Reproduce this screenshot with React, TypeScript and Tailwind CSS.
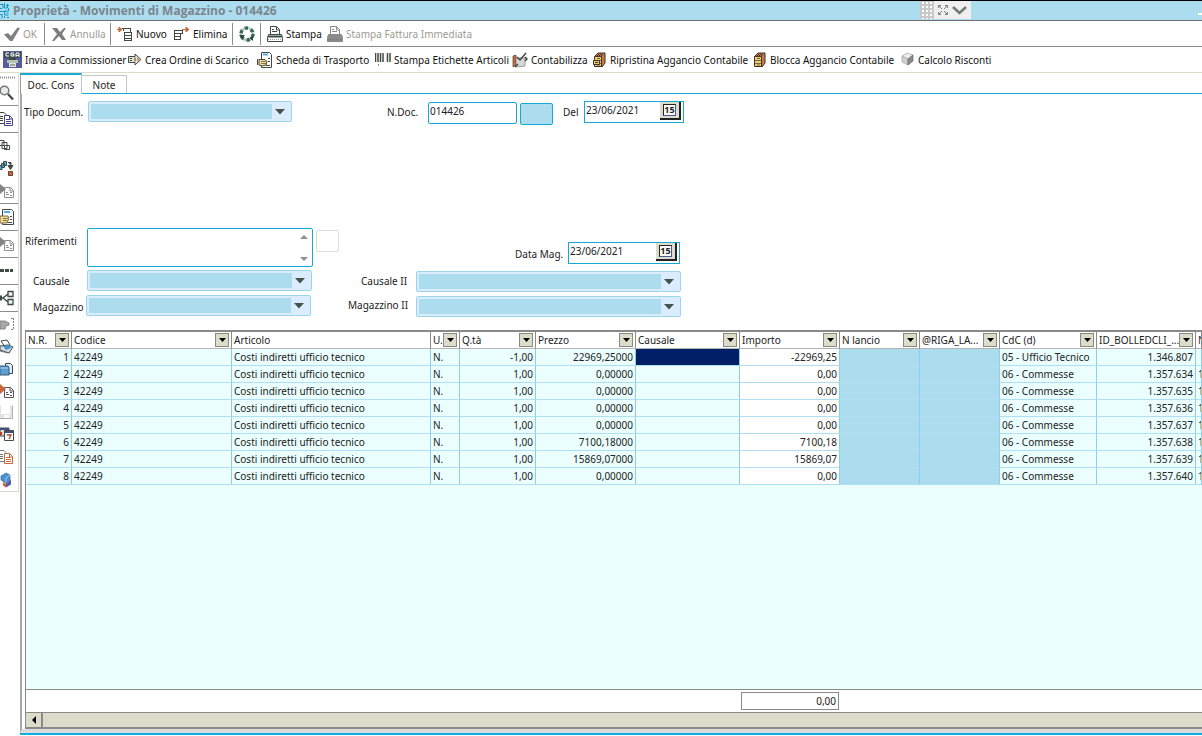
import React from "react";

type IconProps = { children: React.ReactNode; w?: number; h?: number };

function Svg({ children, w = 16, h = 16 }: IconProps) {
  return (
    <svg width={w} height={h} viewBox={`0 0 ${w} ${h}`} className="shrink-0" fill="none" aria-hidden="true">
      {children}
    </svg>
  );
}

const ink = "#3f4a44";

const CheckIcon = () => (
  <Svg>
    <path d="M0 8.500 4 7l3 3L13.500 1.500 16 2 8.500 15H6z" fill="#808080" />
  </Svg>
);
const CrossIcon = () => (
  <Svg>
    <path d="M1 2h5l3 4 4-4h2l-4 6 4 6h-4l-3-4-5 5H1l5-7z" fill="#7c7c7c" />
  </Svg>
);
const NewIcon = () => (
  <Svg>
    <path d="M0 3.500h4M2 1l3 2.500L2 6z" stroke="#c8683a" fill="#c8683a" />
    <path d="M5 2.500h9M6.500 2v3M13.500 2v5" stroke={ink} />
    <path d="M7 6.500h8M7 9.500h8M7 12.500h8M7 14.500h8M7.500 6v9M14.500 6v9" stroke={ink} />
  </Svg>
);
const RemoveIcon = () => (
  <Svg>
    <path d="M0 4.500h9M0 7.500h9M0 10.500h7M0 13.500h7M.5 4v10M6.500 8v6M8.500 4v4" stroke={ink} />
    <path d="M8 3.500h5M12 1l3 2.500L12 6z" stroke="#c8683a" fill="#c8683a" />
  </Svg>
);
const RecycleIcon = () => (
  <Svg>
    <circle cx="8" cy="8" r="6" stroke="#3f6a52" strokeWidth="3.500" strokeDasharray="3.500 2.800" />
    <circle cx="8" cy="8" r="6" stroke="#8fb7cf" strokeWidth="2" strokeDasharray="1.800 4.500" strokeDashoffset="-4" />
    <path d="M0 9h6l-3 4zM10 12l4 3v-5z" fill="#2f4a3c" />
  </Svg>
);
const PrinterIcon = ({ dim = false }: { dim?: boolean }) => {
  const c = dim ? "#8a8a8a" : ink;
  return (
    <Svg>
      <path d="M3.500 8V.5h6l3 3V8" stroke={c} fill="#fff" />
      <path d="M5 3.500h2M5 5.500h5M9.500 1v3h3" stroke={c} />
      <path d="M1.500 8.500h13l1 3v4H.5v-4z" fill={dim ? "#8a8a8a" : "#fff"} stroke={c} />
      <path d="M1 10.500h14" stroke={c} strokeWidth={dim ? 1 : 2} />
      <path d="M1 13.500h14" stroke={dim ? "#777" : "#9a9a9a"} strokeDasharray="1 1" />
    </Svg>
  );
};
const CgaIcon = () => (
  <Svg w={19} h={17}>
    <path d="M0 0h19v17H0z" fill="#5a5a9e" />
    <path d="M1 1h17v6H1z" fill="#3d4a52" />
    <path d="M6 2H3v3h3M11 2H8v3h3V3.500H9.500M13 6V2h3v4M13 4.500h3" stroke="#fff" />
    <path d="M4 9h11v3H4z" fill="#b8c4b0" />
    <path d="M6 7h7v2H6z" fill="#3f4a44" />
    <path d="M6 12h7v4H6z" fill="#dfe5d8" />
    <path d="M7 14h5" stroke="#5c6b5c" />
  </Svg>
);
const OrderArrowIcon = () => (
  <Svg w={14} h={14}>
    <path d="M.5 3.500H7V1l6 5.500L7 12V9.500H.5z" fill="#e6e0d0" stroke={ink} />
    <path d="M2 5.500h2M2 7.500h2M7 4.500v4" stroke={ink} />
    <path d="M9 5h2v3H9z" fill="#e09050" />
  </Svg>
);
const HandDocIcon = () => (
  <Svg>
    <path d="M4.500 .5h8l2 2v13h-10z" fill="#fff" stroke={ink} />
    <path d="M6 2.500h5" stroke="#5aa8e0" strokeWidth="2" />
    <path d="M11 6.500h2M11 9.500h2M9 13.500h4" stroke={ink} />
    <path d="M.5 7v6M2 7.500h6l2 2-1 3.500-4 1-3-1z" fill="#f2dc9c" stroke="#4a4a40" />
    <path d="M4 9.500h5M4 11.500h5" stroke="#8a7440" />
  </Svg>
);
const BarcodeIcon = () => (
  <Svg>
    <path d="M.5 1v9M3 1v9M5.500 1v9M8 1v9" stroke={ink} strokeWidth="1.500" />
    <path d="M3.500 12v1.500" stroke="#777" />
    <path d="M12.500 1v9M15 1v9" stroke={ink} strokeWidth="1.500" />
  </Svg>
);
const LedgerIcon = () => (
  <Svg>
    <path d="M1 4l3-1v10l-3 2z" fill="#c8683a" stroke="#5a4032" strokeWidth=".7" />
    <path d="M4 6h9v8l-9 1z" fill="#d8d8d8" stroke="#777" strokeWidth=".7" />
    <path d="M5 5l3 3 6-7M3 15l3-3M13 5l2 2-2 2" stroke={ink} strokeWidth="1.500" />
  </Svg>
);
const CabinetIcon = ({ open = false }: { open?: boolean }) => (
  <Svg w={14} h={16}>
    <path d="M2 4l3-3h7v10l-3 4z" fill="#c8784c" stroke="#3f352c" />
    <path d="M5 2.500h6M4 3.500h6" stroke="#3f352c" strokeDasharray="1 1" />
    <path d="M1.500 4.500h7v10h-7z" fill="#f0cc6c" stroke="#3f352c" />
    <path d="M2 8.500h6M2 11.500h6M4 6.500h3M4 13h3" stroke="#5c4a30" strokeWidth=".8" />
    {open && <path d="M.5 8.500h6v4h-6z" fill="#f0cc6c" stroke="#3f352c" />}
    {open && <path d="M2 10.500h3" stroke="#3f352c" />}
  </Svg>
);
const CubeIcon = () => (
  <Svg w={14} h={15}>
    <path d="M1 4l5-3 6 2-5 4z" fill="#ececec" stroke="#a5a5a5" strokeWidth=".7" />
    <path d="M1 4l6 3v6l-6-3z" fill="#cfcfcf" stroke="#a5a5a5" strokeWidth=".7" />
    <path d="M7 7l5-4v6l-5 4z" fill="#8b8b8b" stroke="#666" strokeWidth=".7" />
  </Svg>
);

/* Rail icons */
const Lens = () => (
  <Svg w={14}>
    <circle cx="4.500" cy="5.500" r="4.300" fill="#e8eaf0" stroke="#777" strokeWidth="1.500" />
    <path d="M8 9l5 5.500" stroke="#444" strokeWidth="2.200" />
  </Svg>
);
const Pages = ({ a = "#444", b = "#46468c" }: { a?: string; b?: string }) => (
  <Svg w={14}>
    <path d="M-1 1.500h5l2 2v9h-7z" fill="#fff" stroke={a} />
    <path d="M0 5.500h3M0 7.500h3M0 9.500h3" stroke={a} />
    <path d="M4.500 4.500h5l3 3v7h-8z" fill="#fff" stroke={b} />
    <path d="M6 8.500h4M6 10.500h5M6 12.500h5M9.500 5v3h3" stroke={b} />
  </Svg>
);
const Windows3 = () => (
  <Svg w={14}>
    <path d="M-1 2.500h5v5h-5zM2 4.500h5v6H2zM4.500 7.500h5v4h-5z" fill="#fff" stroke={ink} />
  </Svg>
);
const StackArrow = () => (
  <Svg w={14}>
    <path d="M-1 4.500h3v4h-3zM1.500 2.500h3v4h-3zM3.500 .5h3v4h-3z" fill="#52b4d8" stroke={ink} />
    <path d="M8 1.500h3v3M8 4.500h5l-2.500 4z" stroke={ink} fill={ink} />
    <path d="M8.500 10.500h4v4h-4z" fill="#c8683a" stroke="#6a4030" />
  </Svg>
);
const ArrowDoc = ({ arrow = "#858585", line = "#8d8d8d" }: { arrow?: string; line?: string }) => (
  <Svg w={14}>
    <path d="M4.500 4.500h6l3 3v7h-9z" fill="#fff" stroke={line} />
    <path d="M6 9.500h2M10 9.500h2M6 11.500h3M10 12.500h2M10 5v3h3" stroke={line} />
    <path d="M0 3V1l6 5-6 5V8z" fill={arrow} />
  </Svg>
);
const HandPage = () => (
  <Svg w={14}>
    <path d="M2.500 .5h9l2 2v13h-11z" fill="#fff" stroke={ink} />
    <path d="M4 3h6" stroke="#5aa8e0" strokeWidth="2" />
    <path d="M10 7.500h2M10 10.500h2M7 13.500h5" stroke={ink} />
    <path d="M0 7h8l1 2-2 5H0z" fill="#f2d894" stroke="#5a5038" strokeWidth=".8" />
    <path d="M3 9.500h5M3 11.500h4" stroke="#8a7440" />
  </Svg>
);
const Dashes = () => (
  <Svg w={14}>
    <path d="M0 6h4v3H0zM5 6h4v3H5zM10 6h3v3h-3z" fill={ink} />
  </Svg>
);
const Share = () => (
  <Svg w={14}>
    <path d="M0 8h3l5-4M3 8l5 4" stroke={ink} strokeWidth="1.500" />
    <path d="M0 5.500h2v5H0z" fill={ink} />
    <path d="M8 1.500h5v5H8zM8 9.500h5v5H8z" fill="#eef6ff" stroke={ink} strokeWidth="1.300" />
  </Svg>
);
const HandGrey = () => (
  <Svg w={14}>
    <path d="M0 5h5l4 2v2L6 10l-1 3H0z" fill="#a8a8a8" stroke="#777" strokeWidth=".8" />
    <path d="M13.500 2v12M11 2.500h3M11 13.500h3" stroke="#858585" strokeDasharray="2 1" />
  </Svg>
);
const BluePrinter = () => (
  <Svg w={14}>
    <path d="M1 2l6-1 3 5-5 2z" fill="#fff" stroke={ink} />
    <path d="M0 7l8-1 5 2-4 6-9-3z" fill="#d6dce0" stroke={ink} />
    <path d="M3 7l6-1 2 3-5 2z" fill="#3e94d0" />
    <path d="M0 12l8 2" stroke="#777" />
  </Svg>
);
const Folder = () => (
  <Svg w={14}>
    <path d="M5.500 2.500h5l2 2v8h-7z" fill="#dcebf8" stroke={ink} />
    <path d="M0 5h8l1 2v7H0z" fill="#5d9fd2" stroke="#34597c" />
    <path d="M0 7h8" stroke="#a9d4f4" />
  </Svg>
);
const Floppy = () => (
  <Svg w={14}>
    <path d="M0 1h12v13H0z" fill="#e4e4e4" />
    <path d="M1 1h9v9H1z" fill="#fff" />
    <path d="M4 11h5v3H4z" fill="#fafafa" />
    <path d="M12.500 2v12.500H0" stroke="#b0b0b0" />
  </Svg>
);
const HelpWindows = () => (
  <Svg w={14}>
    <path d="M0 2h9v8H0z" fill="#e8d8d0" stroke={ink} />
    <path d="M0 2h9v2H0z" fill="#46507c" />
    <path d="M1 6v3" stroke="#b04030" strokeWidth="2" />
    <path d="M4.500 4.500h9v10h-9z" fill="#fff" stroke={ink} />
    <path d="M5 5h8v2H5z" fill="#46507c" />
    <path d="M7 9h4l-2 4" stroke="#b04030" strokeWidth="1.300" />
  </Svg>
);
const Blocks = () => (
  <Svg w={14}>
    <path d="M1 4l5-3 4 2v5l-4 3-5-3z" fill="#4e8fd0" stroke="#36689c" strokeWidth=".7" />
    <path d="M6 6l4-3M6 6v4" stroke="#9cc8f0" />
    <path d="M3 10l3 2v3.500l-3-2z" fill="#c8683a" />
    <path d="M6 11.500l5-4v5l-5 3z" fill="#5a5a9e" />
  </Svg>
);

type Tool = { label: string; icon: React.ReactNode; width: string; dim?: boolean; sep?: boolean };

const mainTools: Tool[] = [
  { label: "OK", icon: <CheckIcon />, width: "w-[40px]", dim: true, sep: true },
  { label: "Annulla", icon: <CrossIcon />, width: "w-[59px]", dim: true, sep: true },
  { label: "Nuovo", icon: <NewIcon />, width: "w-[57px]" },
  { label: "Elimina", icon: <RemoveIcon />, width: "w-[58px]", sep: true },
  { label: "", icon: <RecycleIcon />, width: "w-[21px]", sep: true },
  { label: "Stampa", icon: <PrinterIcon />, width: "w-[60px]" },
  { label: "Stampa Fattura Immediata", icon: <PrinterIcon dim />, width: "w-[150px]", dim: true },
];

const docTools: Tool[] = [
  { label: "Invia a Commissioner", icon: <CgaIcon />, width: "w-[125px]" },
  { label: "Crea Ordine di Scarico", icon: <OrderArrowIcon />, width: "w-[129px]" },
  { label: "Scheda di Trasporto", icon: <HandDocIcon />, width: "w-[118px]" },
  { label: "Stampa Etichette Articoli", icon: <BarcodeIcon />, width: "w-[137px]" },
  { label: "Contabilizza", icon: <LedgerIcon />, width: "w-[81px]" },
  { label: "Ripristina Aggancio Contabile", icon: <CabinetIcon open />, width: "w-[160px]" },
  { label: "Blocca Aggancio Contabile", icon: <CabinetIcon />, width: "w-[148px]" },
  { label: "Calcolo Risconti", icon: <CubeIcon />, width: "w-[100px]" },
];

const rail: { name: string; icon: React.ReactNode; box: string; sep?: boolean }[] = [
  { name: "Cerca", icon: <Lens />, box: "h-[25px]", sep: true },
  { name: "Copia", icon: <Pages />, box: "h-[27px]", sep: true },
  { name: "Finestre", icon: <Windows3 />, box: "h-[26px]" },
  { name: "Sposta", icon: <StackArrow />, box: "h-[19px]" },
  { name: "Importa", icon: <ArrowDoc />, box: "h-[26px]", sep: true },
  { name: "Proprietà", icon: <HandPage />, box: "h-[27px]", sep: true },
  { name: "Esporta", icon: <ArrowDoc />, box: "h-[27px]", sep: true },
  { name: "Sequenza", icon: <Dashes />, box: "h-[27px]", sep: true },
  { name: "Relazioni", icon: <Share />, box: "h-[27px]", sep: true },
  { name: "Seleziona", icon: <HandGrey />, box: "h-[23px]" },
  { name: "Stampa", icon: <BluePrinter />, box: "h-[23px]" },
  { name: "Cartella", icon: <Folder />, box: "h-[22px]" },
  { name: "Invia", icon: <ArrowDoc arrow="#c8683a" line="#555" />, box: "h-[21px]" },
  { name: "Salva", icon: <Floppy />, box: "h-[22px]" },
  { name: "Guida", icon: <HelpWindows />, box: "h-[22px]" },
  { name: "Duplica", icon: <Pages a="#777" b="#c8683a" />, box: "h-[23px]" },
  { name: "Moduli", icon: <Blocks />, box: "h-[23px]" },
];

const columns = [
  { label: "N.R.", width: "w-[46px]" },
  { label: "Codice", width: "w-[160px]" },
  { label: "Articolo", width: "w-[199px]", noFilter: true },
  { label: "U.", width: "w-[29px]" },
  { label: "Q.tà", width: "w-[76px]" },
  { label: "Prezzo", width: "w-[100px]" },
  { label: "Causale", width: "w-[104px]" },
  { label: "Importo", width: "w-[100px]" },
  { label: "N lancio", width: "w-[80px]" },
  { label: "@RIGA_LA...", width: "w-[80px]" },
  { label: "CdC (d)", width: "w-[97px]" },
  { label: "ID_BOLLEDCLI_...", width: "w-[99px]" },
  { label: "N", width: "w-[100px]", noFilter: true },
];

const rows = [
  ["-1,00", "22969,25000", "-22969,25", "05 - Ufficio Tecnico", "1.346.807", ""],
  ["1,00", "0,00000", "0,00", "06 - Commesse", "1.357.634", "1"],
  ["1,00", "0,00000", "0,00", "06 - Commesse", "1.357.635", "1"],
  ["1,00", "0,00000", "0,00", "06 - Commesse", "1.357.636", "1"],
  ["1,00", "0,00000", "0,00", "06 - Commesse", "1.357.637", "1"],
  ["1,00", "7100,18000", "7100,18", "06 - Commesse", "1.357.638", "1"],
  ["1,00", "15869,07000", "15869,07", "06 - Commesse", "1.357.639", "1"],
  ["1,00", "0,00000", "0,00", "06 - Commesse", "1.357.640", "1"],
];

function Toolbar({ tools, className }: { tools: Tool[]; className: string }) {
  return (
    <div role="toolbar" className={`flex shrink-0 items-center overflow-hidden ${className}`}>
      {tools.map((t, i) => (
        <React.Fragment key={i}>
          <button
            type="button"
            aria-label={t.label || "Aggiorna"}
            className={`flex shrink-0 items-center gap-[3px] whitespace-nowrap ${t.width} ${t.dim ? "text-[#9a9c92]" : "text-[#111]"}`}
          >
            {t.icon}
            {t.label}
          </button>
          {t.sep && <span className="mr-1.5 h-[22px] w-px shrink-0 bg-[#8c8c8c]" />}
        </React.Fragment>
      ))}
    </div>
  );
}

function Combo({ id, className }: { id: string; className: string }) {
  return (
    <div className={`relative h-[21px] shrink-0 rounded-xs border border-[#9bd5ea] bg-[#dbecff] py-0.5 pr-[19px] pl-0.5 ${className}`}>
      <select id={id} className="block h-full w-full appearance-none bg-[#abddee] outline-none">
        <option value="" />
      </select>
      <svg width="10" height="6" viewBox="0 0 10 6" className="pointer-events-none absolute top-[7px] right-[6px]" aria-hidden="true">
        <path d="M0 0h10L5 5.500z" fill="#46524c" />
      </svg>
    </div>
  );
}

function DateBox({ id, className }: { id: string; className: string }) {
  return (
    <div className={`flex h-[22px] shrink-0 border border-[#15a9d8] bg-white ${className}`}>
      <input id={id} defaultValue="23/06/2021" className="min-w-0 flex-1 px-px pb-1 outline-none" />
      <button
        type="button"
        aria-label="Calendario"
        className="mr-0.5 flex h-[18px] w-[21px] items-center justify-center border-r-2 border-b-2 border-[#222] bg-[#dcdccb]"
      >
        <span className="h-[12px] w-[13px] border border-[#222] border-r-[#4a5a9c] border-b-[#4a5a9c] bg-white text-center text-[9px] leading-[10px] font-bold">
          15
        </span>
      </button>
    </div>
  );
}

const cell = "border-r border-b border-r-[#8fcdea] border-b-[#aedff3] px-0.5 py-0 overflow-hidden whitespace-nowrap";

export default function App() {
  return (
    <div className="flex h-screen flex-col overflow-hidden bg-white pb-px font-['Noto_Sans',sans-serif] text-[10px] leading-4 text-[#222]">
      <header className="relative flex h-[21px] shrink-0 items-center gap-0.5 border-t border-b border-t-black border-b-[#6f6f6f] bg-[#abddee]">
        <svg width="11" height="18" viewBox="0 0 11 18" fill="none" stroke="#1596c8" aria-hidden="true">
          <path d="M0 2.500h3v4M4.500 1v5h3V2M0 9.500h6M0 12.500h2v4M9 3.500h-3M8.500 6v3h-4v4h4M0 6.500h2M4.500 16v-2M7 15.500h2M8.500 11h-2" />
        </svg>
        <h1 className="font-['Open_Sans',sans-serif] text-[12px] font-bold text-[#7b858d]">Proprietà - Movimenti di Magazzino - 014426</h1>
        <div className="absolute top-0 left-[920px] flex h-[18px] w-[51px] items-center gap-1 bg-[#efefef]">
          <svg width="14" height="18" viewBox="0 0 14 18" aria-hidden="true">
            <path d="M0 0h14v18H0z" fill="#c9c9c9" />
            <path d="M3 1v17M7 1v17M11 1v17" stroke="#fff" strokeWidth="2" strokeDasharray="2 2" />
          </svg>
          <svg width="10" height="10" viewBox="0 0 10 10" fill="none" stroke="#7b7b7b" aria-hidden="true">
            <path d="M.5 3V.5H3M7 .5h2.500V3M9.500 7v2.500H7M3 9.500H.5V7M1 1l3 3M9 1 6 4M9 9 6 6M1 9l3-3" />
          </svg>
          <svg width="15" height="9" viewBox="0 0 15 9" fill="none" aria-hidden="true">
            <path d="M1 1l6.500 6L14 1" stroke="#6f7c76" strokeWidth="2.500" />
          </svg>
        </div>
        <span className="mt-1.5 ml-auto h-0.5 w-1 bg-white" />
      </header>

      <Toolbar tools={mainTools} className="h-[26px] border-b border-[#8a8a8a] pl-1" />
      <Toolbar tools={docTools} className="h-[26px] border-b border-[#dcdccb] pl-[3px]" />

      <div className="flex min-h-0 flex-1">
        <nav className="flex w-[19px] shrink-0 flex-col self-start overflow-hidden border-r border-b border-[#d8d8cf] pt-[3px]">
          <svg width="15" height="5" viewBox="0 0 15 5" className="shrink-0" aria-hidden="true">
            <path d="M0 1.500h15" stroke="#8c8c8c" strokeWidth="2" strokeDasharray="1 1" />
          </svg>
          {rail.map((r, i) => (
            <button
              key={i}
              type="button"
              aria-label={r.name}
              className={`flex w-[18px] shrink-0 items-center ${r.box} ${r.sep ? "border-b border-[#8c8c8c]" : ""}`}
            >
              {r.icon}
            </button>
          ))}
        </nav>

        <main className="ml-px flex min-w-0 flex-1 flex-col border-b-2 border-[#0cade0]">
          <div role="tablist" className="flex h-[21px] shrink-0 items-end border-b border-[#15a9d8]">
            <button
              type="button"
              role="tab"
              aria-selected="true"
              className="-mb-px h-[21px] w-[62px] border-t-2 border-r border-l border-t-[#15a9d8] border-r-[#c4c4c4] border-l-[#9a9a9a] bg-white"
            >
              Doc. Cons
            </button>
            <button type="button" role="tab" aria-selected="false" className="h-[18px] w-[45px] border-t border-r border-[#c4c4c4]">
              Note
            </button>
          </div>

          <div className="flex min-h-0 flex-1 flex-col border-b-4 border-l-2 border-b-[#dcdcdc] border-l-[#a8a8a8] whitespace-nowrap">
            <div className="flex h-[134px] shrink-0 items-start pt-[7px] pl-0.5">
              <label htmlFor="tipo" className="mt-[3px] w-16 shrink-0">Tipo Docum.</label>
              <Combo id="tipo" className="w-[204px]" />
              <label htmlFor="ndoc" className="mt-[3px] ml-[95px] w-[41px] shrink-0">N.Doc.</label>
              <input id="ndoc" defaultValue="014426" className="mt-px h-[22px] w-[89px] rounded-xs border border-[#15a9d8] px-px pb-1 outline-none" />
              <input aria-label="Serie" className="mt-0.5 ml-[3px] h-[22px] w-[33px] rounded-xs border border-[#15a9d8] bg-[#abddee] outline-none" />
              <label htmlFor="del" className="mt-[3px] ml-[10px] w-[21px] shrink-0">Del</label>
              <DateBox id="del" className="w-[100px]" />
            </div>

            <div className="flex h-[42px] shrink-0 items-start pl-[3px]">
              <label htmlFor="rif" className="mt-[5px] w-[62px] shrink-0">Riferimenti</label>
              <div className="relative h-[39px] w-[226px] shrink-0 rounded-xs border border-[#15a9d8]">
                <textarea id="rif" className="block h-full w-full resize-none pr-4 outline-none" />
                <svg width="8" height="27" viewBox="0 0 8 27" className="pointer-events-none absolute top-[6px] right-1" aria-hidden="true">
                  <path d="M0 4h8L4 0zM0 22h8l-4 4z" fill="#8f8f8f" />
                </svg>
              </div>
              <button type="button" aria-label="Dettagli" className="mt-0.5 ml-[3px] h-[22px] w-[23px] rounded-xs border border-[#dcdce0]" />
              <label htmlFor="datamag" className="mt-[18px] ml-[176px] w-[53px] shrink-0">Data Mag.</label>
              <DateBox id="datamag" className="mt-[14px] w-[112px]" />
            </div>

            <div className="flex h-[25px] shrink-0 items-start pl-[11px]">
              <label htmlFor="causale" className="mt-[3px] w-[54px] shrink-0">Causale</label>
              <Combo id="causale" className="w-[225px]" />
              <label htmlFor="causale2" className="mt-[3px] ml-[49px] w-[55px] shrink-0">Causale II</label>
              <Combo id="causale2" className="mt-px w-[265px]" />
            </div>
            <div className="flex h-[35px] shrink-0 items-start pl-[11px]">
              <label htmlFor="mag" className="mt-[4px] w-[53px] shrink-0">Magazzino</label>
              <Combo id="mag" className="w-[225px]" />
              <label htmlFor="mag2" className="mt-[2px] ml-[37px] w-[68px] shrink-0">Magazzino II</label>
              <Combo id="mag2" className="mt-px w-[265px]" />
            </div>

            <section className="ml-[3px] flex min-h-0 flex-1 flex-col border-t-2 border-b-2 border-l border-[#8a8a8a]">
              <div className="min-h-0 flex-1 overflow-hidden bg-[#ebffff]">
                <table className="w-full table-fixed border-separate border-spacing-0">
                  <colgroup>
                    {columns.map((c, i) => (
                      <col key={i} className={i === columns.length - 1 ? "" : c.width} />
                    ))}
                  </colgroup>
                  <thead>
                    <tr className="h-[17px] bg-white">
                      {columns.map((c, i) => (
                        <th key={i} scope="col" className="border-r border-b border-r-[#8a8a8a] border-b-[#b4b4b4] p-0 text-left font-normal">
                          <span className="flex h-4 items-center overflow-hidden px-0.5 leading-4 whitespace-nowrap">
                            <span className="min-w-0 flex-1">{c.label}</span>
                            {!c.noFilter && (
                              <button
                                type="button"
                                aria-label={`Filtra ${c.label}`}
                                className="flex h-[14px] w-[14px] shrink-0 items-center justify-center border border-[#8a8a7c] bg-[#dcdccb]"
                              >
                                <svg width="7" height="4" viewBox="0 0 7 4" aria-hidden="true">
                                  <path d="M0 0h7L3.500 4z" fill="#000" />
                                </svg>
                              </button>
                            )}
                          </span>
                        </th>
                      ))}
                    </tr>
                  </thead>
                  <tbody>
                    {rows.map(([qta, prezzo, importo, cdc, id, extra], i) => (
                      <tr key={i} className="h-[17px]">
                        <td className={`${cell} text-right`}>{i + 1}</td>
                        <td className={cell}>42249</td>
                        <td className={cell}>Costi indiretti ufficio tecnico</td>
                        <td className={cell}>N.</td>
                        <td className={`${cell} text-right`}>{qta}</td>
                        <td className={`${cell} text-right`}>{prezzo}</td>
                        <td className={`${cell} ${i === 0 ? "bg-[#001f66]" : ""}`} />
                        <td className={`${cell} bg-white text-right`}>{importo}</td>
                        <td className={`${cell} bg-[#abddee]`} />
                        <td className={`${cell} bg-[#abddee]`} />
                        <td className={cell}>{cdc}</td>
                        <td className={`${cell} text-right`}>{id}</td>
                        <td className={cell}>{extra}</td>
                      </tr>
                    ))}
                  </tbody>
                </table>
              </div>
              <div className="flex h-[23px] shrink-0 items-start border-t border-[#8a8a8a] pt-0.5 pl-[715px]">
                <output className="h-[18px] w-[98px] border border-[#8a8a8a] px-0.5 text-right">0,00</output>
              </div>
              <div className="flex h-[15px] shrink-0 border-t border-[#8a8a8a] bg-[#dcdccb]">
                <button type="button" aria-label="Scorri a sinistra" className="flex w-[17px] items-center justify-center border-r-2 border-[#8a8a8a]">
                  <svg width="4" height="8" viewBox="0 0 4 8" aria-hidden="true">
                    <path d="M4 0v8L0 4z" fill="#000" />
                  </svg>
                </button>
              </div>
            </section>
          </div>
        </main>
      </div>
    </div>
  );
}
